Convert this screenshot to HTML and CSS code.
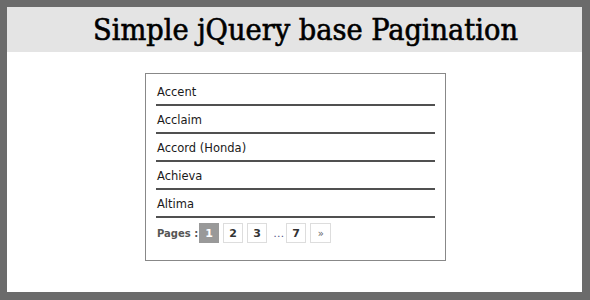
FILE: index.html
```html
<!DOCTYPE html>
<html>
<head>
<meta charset="utf-8">
<link rel="stylesheet" href="styles.css">
</head>
<body>
<div class="frame">
  <header class="header"><h1 class="title">Simple jQuery base Pagination</h1></header>
  <main class="main">
    <div class="box">
      <ul class="list">
        <li class="item">Accent</li>
        <li class="item">Acclaim</li>
        <li class="item">Accord (Honda)</li>
        <li class="item">Achieva</li>
        <li class="item">Altima</li>
      </ul>
      <div class="pager">
        <span class="pager-label">Pages :</span>
        <span class="page active">1</span>
        <span class="page">2</span>
        <span class="page">3</span>
        <span class="dots">…</span>
        <span class="page">7</span>
        <span class="page next">»</span>
      </div>
    </div>
  </main>
</div>
</body>
</html>
```
FILE: styles.css
```css
html, body { margin: 0; padding: 0; }
body { width: 590px; height: 300px; background: #6b6b6b; }
.frame {
  box-sizing: border-box;
  width: 590px; height: 300px;
  padding: 7px 8px 8px 7px;
  display: flex; flex-direction: column;
}
.header {
  background: #e4e4e4;
  height: 45px;
  display: flex; align-items: center; justify-content: center;
  padding-left: 22px;
}
.title {
  margin: 0;
  font-family: "DejaVu Serif Condensed", "DejaVu Serif", serif;
  font-weight: normal;
  font-size: 30.3px;
  color: #000;
  -webkit-text-stroke: 0.6px #000;
  letter-spacing: 0;
}
.main {
  flex: 1;
  background: #fff;
  padding-top: 21px;
  padding-left: 138px;
}
.box {
  box-sizing: border-box;
  width: 301px; height: 188px;
  border: 1px solid #888;
  padding: 4px 10px 0 10px;
  font-family: "DejaVu Sans", Tahoma, sans-serif;
}
.list { list-style: none; margin: 0; padding: 0; }
.item {
  height: 26px;
  line-height: 28px;
  border-bottom: 2px solid #505050;
  font-size: 11.5px;
  color: #1a1a1a;
  padding-left: 1px;
}
.pager {
  display: flex; align-items: center;
  margin-top: 5px;
  font-size: 11px; font-weight: bold;
}
.pager-label { color: #555; margin-left: 1px; margin-right: 1px; font-size: 10px; }
.page {
  box-sizing: border-box;
  width: 20px; height: 20px;
  border: 1px solid #ddd;
  margin-right: 4px;
  display: flex; align-items: center; justify-content: center;
  color: #333;
}
.page.active { background: #999; border-color: #999; color: #fff; }
.page.next { width: 21px; font-size: 10px; font-weight: normal; color: #666; }
.dots { width: 15px; text-align: center; color: #558; font-weight: normal; }
```
